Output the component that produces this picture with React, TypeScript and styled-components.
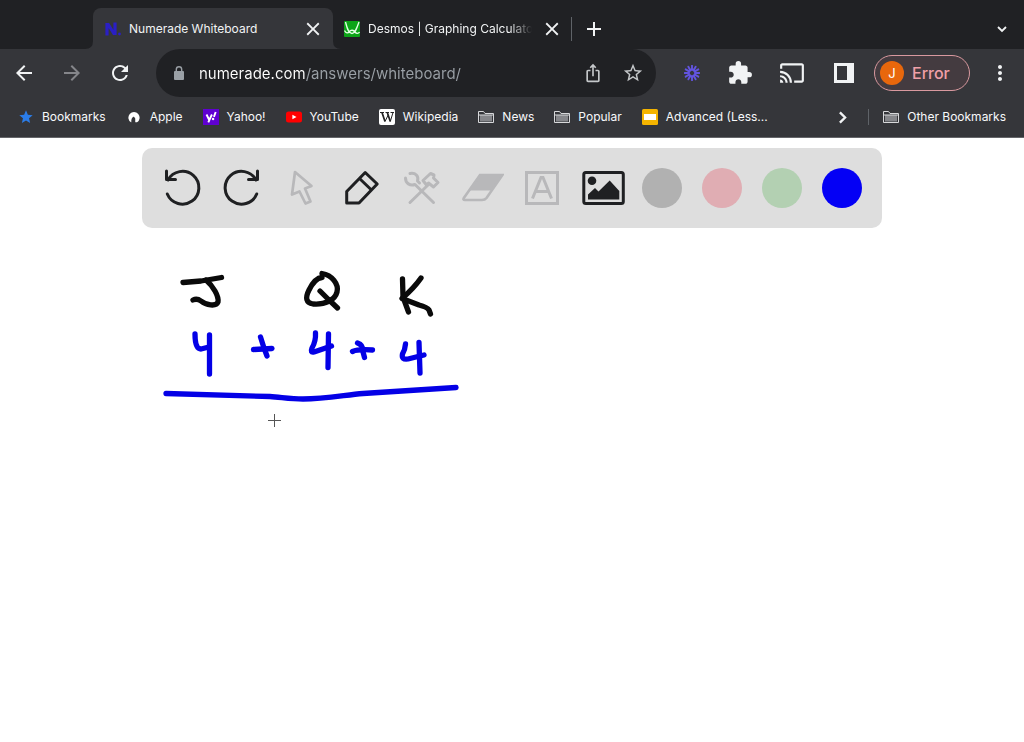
import React from "react";
import styled, { createGlobalStyle } from "styled-components";
import {
  MdAdd,
  MdArrowBack,
  MdArrowForward,
  MdCast,
  MdClose,
  MdExtension,
  MdIosShare,
  MdMoreVert,
  MdRefresh,
  MdStar,
  MdStarBorder,
} from "react-icons/md";

const GlobalStyle = createGlobalStyle`
  *, *::before, *::after { box-sizing: border-box; }
  body {
    margin: 0;
    background: #ffffff;
    font-family: Inter, "Liberation Sans", sans-serif;
    font-size: 12px;
    line-height: 16px;
    color: #f1f3f4;
  }
  button, input { font: inherit; color: inherit; }
  svg { display: block; flex: none; }
`;

const Page = styled.div`
  display: flex;
  flex-direction: column;
  min-height: 100vh;
`;

const Plain = styled.button`
  border: 0;
  padding: 0;
  background: none;
  cursor: pointer;
`;

const IconButton = styled(Plain)<{ $tone?: string }>`
  display: flex;
  flex: none;
  align-items: center;
  justify-content: center;
  width: 24px;
  height: 24px;
  color: ${(p) => p.$tone ?? "#f1f3f4"};
`;

/* Tab strip */

const TabStrip = styled.div`
  display: flex;
  align-items: flex-end;
  height: 49px;
  padding: 0 10px 0 93px;
  background: #202124;
`;

const TabItem = styled.div<{ $active?: boolean }>`
  position: relative;
  display: flex;
  align-items: center;
  gap: 8px;
  width: ${(p) => (p.$active ? 240 : 238)}px;
  height: 41px;
  padding: ${(p) => (p.$active ? "0 8px 0 12px" : "0 7px 0 11px")};
  border-radius: 8px 8px 0 0;
  background: ${(p) => (p.$active ? "#35363a" : "transparent")};
`;

const TabLabel = styled(Plain)<{ $fade?: boolean }>`
  display: flex;
  flex: 1;
  align-items: center;
  gap: 8px;
  min-width: 0;
  text-align: left;

  span {
    flex: 1;
    overflow: hidden;
    white-space: nowrap;
    mask-image: ${(p) => (p.$fade ? "linear-gradient(to right, #000 86%, transparent)" : "none")};
  }
`;

const Flare = styled.svg`
  position: absolute;
  left: -8px;
  bottom: 0;
`;

const Divider = styled.div<{ $height: number }>`
  flex: none;
  width: 1px;
  height: ${(p) => p.$height}px;
  background: #5f6368;
`;

const TabActions = styled.div`
  display: flex;
  flex: 1;
  align-items: center;
  height: 41px;
  gap: 10px;

  > :last-child { margin-left: auto; }
`;

/* Address bar */

const NavBar = styled.div`
  display: flex;
  align-items: center;
  height: 48px;
  padding: 0 12px;
  background: #35363a;
`;

const NavGroup = styled.div<{ $gap: number }>`
  display: flex;
  flex: none;
  align-items: center;
  gap: ${(p) => p.$gap}px;
`;

const ProfileGroup = styled(NavGroup)`
  margin-left: 18px;
`;

const Omnibox = styled.form`
  display: flex;
  flex: 1;
  align-items: center;
  gap: 16px;
  height: 48px;
  margin: 0 24px;
  padding: 0 11px 0 15px;
  border-radius: 24px;
  background: #202124;
  color: #9aa0a6;
`;

const UrlInput = styled.input`
  flex: 1;
  min-width: 0;
  height: 24px;
  margin-left: -4px;
  padding: 0;
  border: 0;
  outline: 0;
  font-size: 15px;
  color: #9aa0a6;
  background: linear-gradient(to right, #ffffff 106px, #9aa0a6 106px);
  background-clip: text;
  -webkit-background-clip: text;
  -webkit-text-fill-color: transparent;
`;

const ProfileButton = styled(Plain)`
  display: flex;
  align-items: center;
  gap: 8px;
  width: 96px;
  height: 36px;
  padding: 0 5px;
  border: 1px solid #d9999f;
  border-radius: 18px;
  background: #443b40;
  color: #f0a0a8;
  font-size: 16px;
  font-weight: 500;
`;

const Avatar = styled.span`
  display: flex;
  align-items: center;
  justify-content: center;
  width: 24px;
  height: 24px;
  border-radius: 50%;
  background: #e8670c;
  color: #ffffff;
  font-size: 13px;
  font-weight: 400;
`;

/* Bookmarks bar */

const BookmarksBar = styled.nav`
  display: flex;
  align-items: center;
  gap: 20px;
  height: 41px;
  padding: 0 18px;
  border-bottom: 1px solid #65666a;
  background: #35363a;
`;

const Bookmark = styled.a`
  display: flex;
  flex: none;
  align-items: center;
  gap: 8px;
  color: #f8f9fa;
  text-decoration: none;
  white-space: nowrap;
`;

const BookmarksEnd = styled.div`
  display: flex;
  flex: none;
  align-items: center;
  gap: 14px;
  margin-left: auto;
`;

/* Whiteboard */

const Board = styled.main`
  display: flex;
  flex: 1;
  flex-direction: column;
  align-items: center;
  padding-top: 10px;
  background: #ffffff;
`;

const Tools = styled.div`
  display: flex;
  align-items: center;
  width: 100%;
  max-width: 740px;
  height: 80px;
  padding: 0 10px;
  border-radius: 10px;
  background: #dedede;
`;

const Tool = styled(Plain)<{ $dim?: boolean }>`
  display: flex;
  flex: 1;
  align-items: center;
  justify-content: center;
  height: 60px;
  color: ${(p) => (p.$dim ? "#b8b8ba" : "#1f2022")};
`;

const Swatch = styled.span<{ $color: string }>`
  width: 40px;
  height: 40px;
  border-radius: 50%;
  background: ${(p) => p.$color};
`;

const Canvas = styled.svg`
  width: 100%;
  max-width: 740px;
  height: 220px;
`;

function TabFlare() {
  return (
    <Flare width="256" height="8" viewBox="0 0 256 8" aria-hidden="true">
      <path d="M0 8 Q8 8 8 0 V8 Z M256 8 Q248 8 248 0 V8 Z" fill="#35363a" />
    </Flare>
  );
}

function NumeradeIcon() {
  return (
    <svg width="16" height="16" viewBox="0 0 16 16" aria-hidden="true">
      <path d="M2 14.500V2M2.600 2.500 9.500 13.500M10 14V1.500" fill="none" stroke="#2a1fc4" strokeWidth="3.200" />
      <circle cx="14.500" cy="13" r="1.400" fill="#2a1fc4" />
    </svg>
  );
}

function DesmosIcon() {
  return (
    <svg width="16" height="16" viewBox="0 0 16 16" aria-hidden="true">
      <rect width="16" height="16" rx="1" fill="#0ca417" />
      <path
        d="M1.500 1C3.500 9 5 12.500 8 12.500S12.500 8 15 1M0.500 9.500C2 12.500 4 12.500 5.500 10.500S9.500 9 11 11 14.500 12.500 15.500 11"
        fill="none"
        stroke="#e3ffe4"
        strokeWidth="1.300"
      />
    </svg>
  );
}

function LockIcon() {
  return (
    <svg width="16" height="16" viewBox="0 0 16 16" aria-hidden="true">
      <rect x="3" y="6" width="10" height="9" rx="1" fill="currentColor" />
      <path d="M5.300 7V4.500A2.700 2.700 0 0 1 10.700 4.500V7" fill="none" stroke="currentColor" strokeWidth="1.400" />
    </svg>
  );
}

function PanelIcon() {
  return (
    <svg width="20" height="20" viewBox="0 0 20 20" aria-hidden="true">
      <path fill="currentColor" fillRule="evenodd" d="M0 0H20V20H0ZM3 3V17H13V3Z" />
    </svg>
  );
}

function BurstIcon() {
  const spokes = Array.from({ length: 12 }, (_, i) => i * 30);
  return (
    <svg width="16" height="16" viewBox="0 0 16 16" aria-hidden="true">
      {spokes.map((angle) => (
        <path
          key={angle}
          d="M8 0.700V5"
          stroke="#6254de"
          strokeWidth="1.900"
          strokeLinecap="round"
          transform={`rotate(${angle} 8 8)`}
        />
      ))}
      <circle cx="8" cy="8" r="3.600" fill="none" stroke="#6254de" strokeWidth="1.800" />
    </svg>
  );
}

function ChevronIcon({ turn = 0, size = 10 }: { turn?: number; size?: number }) {
  return (
    <svg width={size} height={size} viewBox="0 0 10 10" aria-hidden="true">
      <path d="M1 3 5 7 9 3" fill="none" stroke="currentColor" strokeWidth="1.800" transform={`rotate(${turn} 5 5)`} />
    </svg>
  );
}

function AppleIcon() {
  return (
    <svg width="16" height="16" viewBox="0 0 16 16" aria-hidden="true">
      <path d="M5 13.300A5.600 5.600 0 1 1 11 13.300" fill="#ffffff" />
      <path d="M5.300 14C5 10 6 8 8 7.500L9.300 9.300V14Z" fill="#35363a" />
      <path d="M7.300 5.500 10.500 9.500V13" fill="none" stroke="#ffffff" strokeWidth="1.500" />
    </svg>
  );
}

function YahooIcon() {
  return (
    <svg width="16" height="16" viewBox="0 0 16 16" aria-hidden="true">
      <rect width="16" height="16" fill="#5f01d1" />
      <path d="M3.500 5.500 6 10.500M8.900 5.500 5.300 13.300M12.700 3 10.900 7.800" fill="none" stroke="#fff" strokeWidth="1.900" />
      <circle cx="10.100" cy="10" r="1.200" fill="#fff" />
    </svg>
  );
}

function YouTubeIcon() {
  return (
    <svg width="16" height="16" viewBox="0 0 16 16" aria-hidden="true">
      <rect y="2.500" width="16" height="11" rx="2.500" fill="#f00" />
      <path d="M6.400 5.700 10.500 8 6.400 10.300Z" fill="#fff" />
    </svg>
  );
}

function WikipediaIcon() {
  return (
    <svg width="16" height="16" viewBox="0 0 16 16" aria-hidden="true">
      <rect width="16" height="16" rx="2" fill="#fff" />
      <path d="M1 3.500H5M6.500 3.500H10M11.500 3.500H15" stroke="#222" strokeWidth="1" />
      <path d="M3 3.500 6 12.500M8.300 3.500 11.300 12.500" stroke="#222" strokeWidth="1.700" />
      <path d="M6 12.500 9.200 6M11.300 12.500 14 3.500" stroke="#222" strokeWidth="1" />
    </svg>
  );
}

function FolderIcon() {
  return (
    <svg width="16" height="16" viewBox="0 0 16 16" aria-hidden="true">
      <path d="M0.500 13.500V2.500H5.500L7 4.500H15.500V13.500Z" fill="#35363a" stroke="#d7d8da" />
      <path d="M2 6H14V12.500H2Z" fill="#85868a" />
      <path d="M0.500 6H15.500" stroke="#d7d8da" />
    </svg>
  );
}

function SlidesIcon() {
  return (
    <svg width="16" height="16" viewBox="0 0 16 16" aria-hidden="true">
      <rect width="16" height="16" rx="1.500" fill="#f4b400" />
      <rect x="2" y="5" width="12" height="6" fill="#fff" />
    </svg>
  );
}

function UndoArc({ mirrored }: { mirrored?: boolean }) {
  return (
    <svg width="44" height="44" viewBox="0 0 44 44" aria-hidden="true">
      <path
        d="M7.300 28A16.400 16.400 0 1 0 8 14M6.500 5V13.500H15.500"
        fill="none"
        stroke="currentColor"
        strokeWidth="3"
        strokeLinecap="round"
        strokeLinejoin="round"
        transform={mirrored ? "translate(44 0) scale(-1 1)" : undefined}
      />
    </svg>
  );
}

function PointerIcon() {
  return (
    <svg width="44" height="44" viewBox="0 0 44 44" aria-hidden="true">
      <path
        d="M15 6 31.500 20 25 22.500 30.500 35.500 25.500 37.500 19.500 25.500 12 28.500Z"
        fill="none"
        stroke="currentColor"
        strokeWidth="2.700"
        strokeLinejoin="round"
      />
    </svg>
  );
}

function PencilIcon() {
  return (
    <svg width="44" height="44" viewBox="0 0 44 44" aria-hidden="true">
      <path
        d="M6.700 37V25.500L25.200 6.500 37.200 18 19 37ZM19.500 12.500 31.500 24"
        fill="none"
        stroke="currentColor"
        strokeWidth="3"
        strokeLinejoin="round"
      />
    </svg>
  );
}

function ToolsIcon() {
  return (
    <svg width="44" height="44" viewBox="0 0 44 44" aria-hidden="true">
      <g fill="none" stroke="currentColor" strokeLinecap="round" strokeLinejoin="round" strokeWidth="3">
        <path d="M5.500 12C5.500 17.500 10 20 15 18.500L33.500 36.500" />
        <path d="M10 7.500C15.500 6.500 19 10 17.500 15L19.500 17" />
        <path d="M10 36.500 28.500 18.500" />
        <path d="M23 14.500 30.500 7.500 34 9 33.500 12 38 16.500 33.500 21 28.500 17 26.500 19Z" />
      </g>
    </svg>
  );
}

function EraserIcon() {
  return (
    <svg width="44" height="44" viewBox="0 0 44 44" aria-hidden="true">
      <path d="M19.500 8.500H43L32 24.500H9Z" fill="currentColor" />
      <path
        d="M20 9H42.500L26.500 32Q25 34 22 34H5Q2.500 34 4 31.800Z"
        fill="none"
        stroke="currentColor"
        strokeWidth="2.600"
      />
    </svg>
  );
}

function TextIcon() {
  return (
    <svg width="44" height="44" viewBox="0 0 44 44" aria-hidden="true">
      <rect x="6.500" y="6.500" width="31" height="31" fill="none" stroke="currentColor" strokeWidth="3" />
      <path d="M12.500 32.500 21 11.500H23L31.500 32.500M16 25.500H28" fill="none" stroke="currentColor" strokeWidth="3" />
    </svg>
  );
}

function ImageIcon() {
  return (
    <svg width="46" height="44" viewBox="0 0 46 44" aria-hidden="true">
      <rect x="4.800" y="6.500" width="39.500" height="31" rx="2" fill="none" stroke="currentColor" strokeWidth="3" />
      <circle cx="13" cy="14.700" r="4.300" fill="currentColor" />
      <path d="M9 33.500V28.500L16 22 19.500 25.500 30.700 14.500 40.300 25V33.500Z" fill="currentColor" />
    </svg>
  );
}

const bookmarks = [
  { label: "Bookmarks", icon: <MdStar size={16} color="#2b7de9" /> },
  { label: "Apple", icon: <AppleIcon /> },
  { label: "Yahoo!", icon: <YahooIcon /> },
  { label: "YouTube", icon: <YouTubeIcon /> },
  { label: "Wikipedia", icon: <WikipediaIcon /> },
  { label: "News", icon: <FolderIcon /> },
  { label: "Popular", icon: <FolderIcon /> },
  { label: "Advanced (Less...", icon: <SlidesIcon /> },
];

const tools = [
  { label: "Undo", icon: <UndoArc /> },
  { label: "Redo", icon: <UndoArc mirrored /> },
  { label: "Select", icon: <PointerIcon />, dim: true },
  { label: "Pen", icon: <PencilIcon /> },
  { label: "Settings", icon: <ToolsIcon />, dim: true },
  { label: "Eraser", icon: <EraserIcon />, dim: true },
  { label: "Text", icon: <TextIcon />, dim: true },
  { label: "Image", icon: <ImageIcon /> },
];

const swatches = [
  { label: "Gray", color: "#b1b1b1" },
  { label: "Red", color: "#e0adb3" },
  { label: "Green", color: "#b3d0b2" },
  { label: "Blue", color: "#0400f5" },
];

const blackInk = [
  "M183 282.500 201 281 221.500 277.500",
  "M206 280C213 286 219 296 218 302C216 307 206 305 201 301Q197 298 193 300",
  "M322 273.500C332 275 339 284 337 292C335 300 325 305 313 304C306 303 305 298 309 290Q315 278 322 277.500",
  "M320 291 328 299 337.500 308",
  "M402.500 279 403 297 408.500 312",
  "M421 278Q414 288 402 298.500L419 305Q427 307 429 310L430.500 314",
];

const blueInk = [
  "M195 334C195 342 196 349 201 349L209 347",
  "M209.500 335V374",
  "M260.500 337 264 348 267 356",
  "M253.500 349.500 272 348.500",
  "M315.500 333Q316 341 312 348Q310 353 314 352L331.500 346",
  "M328.500 334 328 367.500",
  "M357.500 343Q363 345 362.500 350L364.500 357.500",
  "M352.500 351.500Q358 349 372.500 350",
  "M405.500 344Q405 350 402.500 354Q401 360 408 359L424 355",
  "M419 342.500 420 373",
  "M166 393.500 270 396.500C280 397 290 399 303 399C325 399 345 395 363 393.500L456 387.500",
];

export default function App() {
  return (
    <Page>
      <GlobalStyle />
      <header>
        <TabStrip>
          <TabItem $active>
            <TabFlare />
            <TabLabel>
              <NumeradeIcon />
              <span>Numerade Whiteboard</span>
            </TabLabel>
            <IconButton aria-label="Close tab">
              <MdClose size={22} />
            </IconButton>
          </TabItem>
          <TabItem>
            <TabLabel $fade>
              <DesmosIcon />
              <span>Desmos | Graphing Calculator</span>
            </TabLabel>
            <IconButton aria-label="Close tab">
              <MdClose size={22} />
            </IconButton>
          </TabItem>
          <TabActions>
            <Divider $height={24} />
            <IconButton aria-label="New tab">
              <MdAdd size={24} />
            </IconButton>
            <IconButton aria-label="Search tabs">
              <ChevronIcon />
            </IconButton>
          </TabActions>
        </TabStrip>

        <NavBar>
          <NavGroup $gap={24}>
            <IconButton aria-label="Back">
              <MdArrowBack size={24} />
            </IconButton>
            <IconButton aria-label="Forward" $tone="#85868a">
              <MdArrowForward size={24} />
            </IconButton>
            <IconButton aria-label="Reload">
              <MdRefresh size={24} />
            </IconButton>
          </NavGroup>
          <Omnibox>
            <LockIcon />
            <UrlInput aria-label="Address" defaultValue="numerade.com/answers/whiteboard/" />
            <IconButton type="button" aria-label="Share" $tone="#c4c7c9">
              <MdIosShare size={20} />
            </IconButton>
            <IconButton type="button" aria-label="Bookmark this page" $tone="#c4c7c9">
              <MdStarBorder size={22} />
            </IconButton>
          </Omnibox>
          <NavGroup $gap={28}>
            <NavGroup $gap={24}>
              <IconButton aria-label="Loom">
                <BurstIcon />
              </IconButton>
              <IconButton aria-label="Extensions">
                <MdExtension size={26} />
              </IconButton>
            </NavGroup>
            <IconButton aria-label="Cast">
              <MdCast size={26} />
            </IconButton>
            <IconButton aria-label="Side panel">
              <PanelIcon />
            </IconButton>
          </NavGroup>
          <ProfileGroup $gap={18}>
            <ProfileButton>
              <Avatar>J</Avatar>
              Error
            </ProfileButton>
            <IconButton aria-label="Menu">
              <MdMoreVert size={24} />
            </IconButton>
          </ProfileGroup>
        </NavBar>

        <BookmarksBar aria-label="Bookmarks">
          {bookmarks.map((b) => (
            <Bookmark key={b.label} href="#">
              {b.icon}
              {b.label}
            </Bookmark>
          ))}
          <BookmarksEnd>
            <IconButton aria-label="More bookmarks">
              <ChevronIcon turn={-90} size={13} />
            </IconButton>
            <Divider $height={16} />
            <Bookmark href="#">
              <FolderIcon />
              Other Bookmarks
            </Bookmark>
          </BookmarksEnd>
        </BookmarksBar>
      </header>

      <Board>
        <Tools role="toolbar" aria-label="Whiteboard tools">
          {tools.map((t) => (
            <Tool key={t.label} aria-label={t.label} $dim={t.dim}>
              {t.icon}
            </Tool>
          ))}
          {swatches.map((s) => (
            <Tool key={s.label} aria-label={s.label}>
              <Swatch $color={s.color} />
            </Tool>
          ))}
        </Tools>
        <Canvas viewBox="142 228 740 220" role="img" aria-label="J Q K, 4 + 4 + 4">
          <g fill="none" strokeLinecap="round" strokeLinejoin="round" strokeWidth="5.300">
            <g stroke="#0a0a0a">
              {blackInk.map((d) => (
                <path key={d} d={d} />
              ))}
            </g>
            <g stroke="#0400e6">
              {blueInk.map((d) => (
                <path key={d} d={d} />
              ))}
            </g>
          </g>
          <path d="M268 420.500H281M274.500 414V427" stroke="#555555" />
        </Canvas>
      </Board>
    </Page>
  );
}
